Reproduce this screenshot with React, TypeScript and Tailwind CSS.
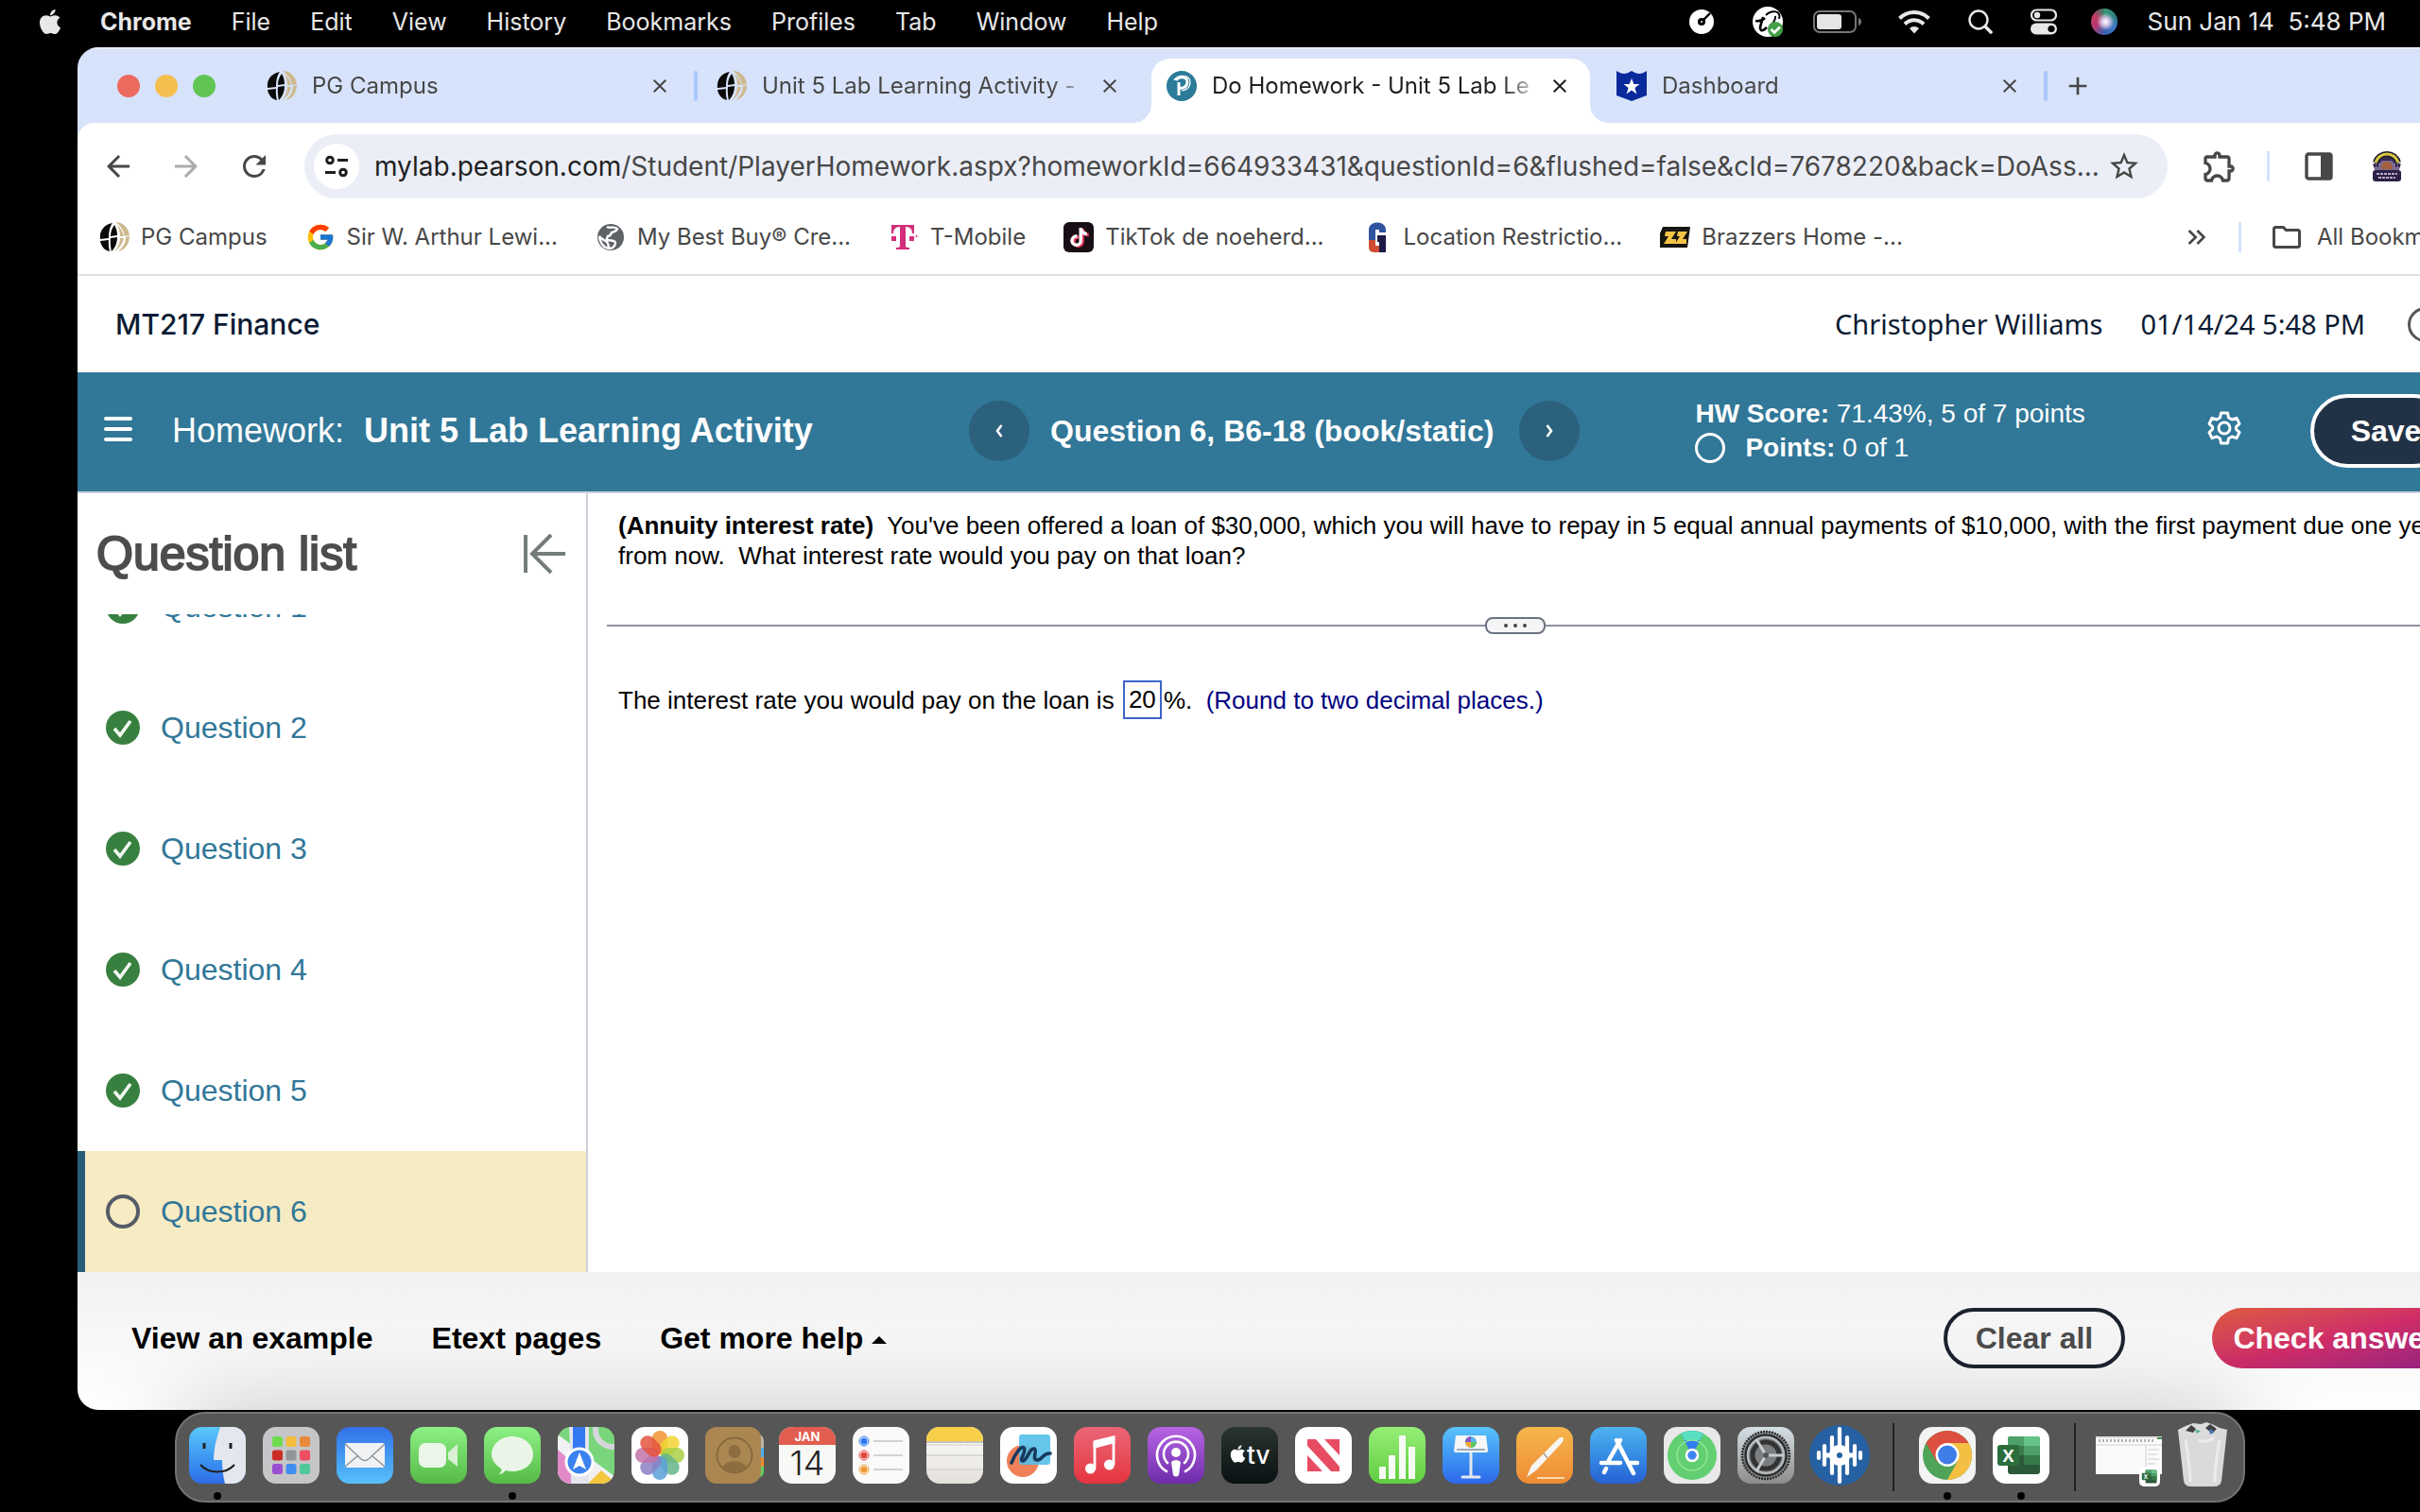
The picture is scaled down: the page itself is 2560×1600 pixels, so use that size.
import type { ReactNode } from "react";
import { FaApple } from "react-icons/fa";
import {
  MdArrowBack,
  MdArrowForward,
  MdClose,
  MdKeyboardDoubleArrowRight,
  MdOutlineExtension,
  MdOutlineFolder,
  MdRefresh,
  MdStarBorder,
  MdAdd,
} from "react-icons/md";
import { FcGoogle } from "react-icons/fc";
import { FaTiktok } from "react-icons/fa6";

/* ---------- Menu bar ---------- */

const menus = ["File", "Edit", "View", "History", "Bookmarks", "Profiles", "Tab", "Window", "Help"];

function MenuBar() {
  return (
    <header className="flex h-[50px] items-center bg-black pb-1 pl-[38px] pr-9 text-[25px] leading-8 text-[#e8e8e8]">
      <FaApple className="mr-[38px] size-[30px] shrink-0" />
      <nav className="flex items-center gap-[42px]">
        <button className="font-bold">Chrome</button>
        {menus.map((m) => (
          <button key={m}>{m}</button>
        ))}
      </nav>
      <div className="ml-auto flex items-center">
        <svg viewBox="0 0 26 26" className="mr-[41px] size-[26px]">
          <circle cx="13" cy="13" r="13" fill="#fff" />
          <circle cx="13" cy="13" r="4" fill="#000" />
          <path d="M14 12 22 4" stroke="#000" strokeWidth="2.4" />
          <circle cx="13" cy="13" r="1" fill="#fff" />
        </svg>
        <svg viewBox="0 0 32 32" className="mr-8 size-8">
          <circle cx="16" cy="16" r="16" fill="#fff" />
          <path d="M3 15c5 1 8-1 10-3M11 11c-1 6-5 12-2 14 2 1 4-1 6-3" stroke="#000" strokeWidth="2.6" fill="none" />
          <path d="M14 9c6-6 17-5 14 4M24 10c1 4-3 8-6 12" stroke="#000" strokeWidth="2" fill="none" />
          <circle cx="24" cy="24" r="8" fill="#43a047" />
          <path d="m19.500 24 3.500 3.500 6-6" stroke="#fff" strokeWidth="2.600" fill="none" />
        </svg>
        <svg viewBox="0 0 52 24" className="mr-[38px] h-6 w-[52px]">
          <rect x="1" y="1" width="44" height="22" rx="6" fill="none" stroke="#777" strokeWidth="2" />
          <rect x="4" y="4" width="26" height="16" rx="3" fill="#e5e5e5" />
          <path d="M48 8c4 1 4 7 0 8Z" fill="#777" />
        </svg>
        <svg viewBox="0 0 34 26" className="mr-10 h-[26px] w-[34px]" fill="none" stroke="#e8e8e8" strokeWidth="4">
          <path d="M1.500 9.500a22 22 0 0 1 31 0" />
          <path d="M7 15.500a14 14 0 0 1 20 0" />
          <path d="M17 25.500 12 20a7 7 0 0 1 10 0Z" fill="#e8e8e8" stroke="none" />
        </svg>
        <svg viewBox="0 0 26 26" className="mr-10 size-[26px]" fill="none" stroke="#e8e8e8">
          <circle cx="11" cy="11" r="9.500" strokeWidth="2.400" />
          <path d="m18 18 6 6" strokeWidth="3.600" strokeLinecap="round" />
        </svg>
        <svg viewBox="0 0 28 28" className="mr-9 size-7">
          <rect x="1" y="1.500" width="26" height="11" rx="5.500" fill="none" stroke="#e8e8e8" strokeWidth="2.200" />
          <circle cx="7" cy="7" r="3.200" fill="#e8e8e8" />
          <rect y="15.500" width="28" height="12" rx="6" fill="#e8e8e8" />
          <circle cx="22" cy="21.500" r="3.600" fill="#000" />
        </svg>
        <span className="mr-8 size-7 rounded-full bg-[radial-gradient(circle_at_55%_50%,#fff_0,#d9c7e8_18%,transparent_45%),conic-gradient(#3a9a78,#2f7f86,#3f78c8,#3a5fae,#b33a72,#c23a60,#3a8068)]" />
        <time className="whitespace-pre text-[26px]">Sun Jan 14  5:48 PM</time>
      </div>
    </header>
  );
}

/* ---------- Favicons ---------- */

function GlobeSlice() {
  return (
    <svg viewBox="0 0 32 32" className="size-8 shrink-0">
      <path d="M14 1C4 3 0 10 1 18l9-1C10 10 11 5 14 1ZM1 20c1 6 5 10 10 11-1-4-1.500-8-1-12ZM12 17l7-1c0 6-2 11-6 15-1-4-1.500-9-1-14ZM16 3c-3 4-4 8-4 12l7-1c0-4-1-8-3-11Z" fill="#0b0b0b" />
      <path d="M17 0c8 0 14 6 15 14l-5 1C26 9 22 3 17 0Zm0 2c4 3 5 8 5 13h4C25 10 22 5 17 2Zm5 15h4c-1 6-5 11-10 14 4-4 6-9 6-14Zm6-1 4-1c0 8-5 15-12 16 5-4 8-9 8-15Z" fill="#cdb98c" />
    </svg>
  );
}

function PearsonMark() {
  return (
    <svg viewBox="0 0 32 32" className="size-8 shrink-0">
      <circle cx="16" cy="16" r="16" fill="#2b7b99" />
      <path d="M13 26V12m-3-2c2-4 12-5 12 2 0 5-5 7-8 6" fill="none" stroke="#fff" strokeWidth="3" />
      <path d="M8 10c2-6 17-7 17 2 0 6-5 9-9 9" fill="none" stroke="#fff" strokeWidth="1.200" />
    </svg>
  );
}

function StarShield() {
  return (
    <svg viewBox="0 0 32 32" className="size-8 shrink-0">
      <path d="M0 0c6 4 10 4 16 0 6 4 10 4 16 0v26L16 32 0 26Z" fill="#0a2a9c" />
      <path d="m16 8 2.400 6h6l-5 4 2 6.500L16 20.500l-5.400 4 2-6.500-5-4h6Z" fill="#fff" />
    </svg>
  );
}

function GrayGlobe() {
  return (
    <svg viewBox="0 0 32 32" className="size-8 shrink-0">
      <circle cx="16" cy="16" r="14" fill="#5f6368" />
      <path d="M12 5c3 2 8-1 11 2-1 3-3 3-6 4-1 3-2 4-4 4 0 2-3 3 0 4s8 0 8 3-3 6-6 6c-2-2-1-5-3-7-3-2-6-3-8-6 1 8 5 13 12 13" fill="none" stroke="#fff" strokeWidth="2.400" />
    </svg>
  );
}

function TMark() {
  return (
    <svg viewBox="0 0 32 32" className="size-8 shrink-0" fill="#d42e7b">
      <path d="M3 3h24v9h-2c0-4-2-7-7-7v19c0 3 1 3 4 3v2H8v-2c3 0 4 0 4-3V5c-5 0-7 3-7 7H3ZM3 15h5v5H3Zm19 0h5v5h-5Z" />
      <circle cx="29.500" cy="15" r="1" />
    </svg>
  );
}

function BlockG() {
  return (
    <svg viewBox="0 0 32 32" className="size-8 shrink-0">
      <path d="M7 20V8c0-10 18-10 18 0v3h-7V8h-4v12Z" fill="#2f55a0" />
      <path d="M7 19h7v6h4v7h-5c-5 0-6-3-6-6Z" fill="#cf4b33" />
      <path d="M16 14h9v18h-7V21h-2Z" fill="#1d1b45" />
    </svg>
  );
}

function ZzMark() {
  return (
    <svg viewBox="0 0 32 32" className="size-8 shrink-0">
      <path d="M3 5h29l-3 22H0V12Z" fill="#17150f" />
      <path d="M6 10h11l-5 8h5v5H4l5-8H5Zm13 0h10l-5 8h4v5H16l5-8h-3Z" fill="#f6c445" />
    </svg>
  );
}

function TikTokMark() {
  return (
    <span className="flex size-8 shrink-0 items-center justify-center rounded-md bg-[#180f16]">
      <FaTiktok className="size-5 text-white drop-shadow-[2px_1px_0_#e8375b]" />
    </span>
  );
}

/* ---------- Browser chrome ---------- */

const tabs = [
  { title: "PG Campus", icon: <GlobeSlice />, divider: true },
  { title: "Unit 5 Lab Learning Activity -", icon: <GlobeSlice /> },
  { title: "Do Homework - Unit 5 Lab Le", icon: <PearsonMark />, active: true },
  { title: "Dashboard", icon: <StarShield />, divider: true },
];

function TabStrip() {
  return (
    <div className="flex h-20 border-t-2 border-[#e6edfc] bg-[#d7e3fb] pl-[42px] pt-[10px] text-[24px] text-[#474747]">
      <div className="mr-[38px] flex h-[58px] items-center gap-4">
        <button aria-label="Close window" className="size-6 rounded-full bg-[#ec6a5e]" />
        <button aria-label="Minimize window" className="size-6 rounded-full bg-[#f4bf4f]" />
        <button aria-label="Zoom window" className="size-6 rounded-full bg-[#61c554]" />
      </div>
      {tabs.map((t) => (
        <div key={t.title} className="flex shrink-0">
          <div
            className={`relative flex h-[68px] w-[464px] items-center rounded-t-[20px] pb-[10px] pl-4 pr-5 ${
              t.active ? "bg-white text-[#1f1f1f]" : ""
            }`}
          >
            {t.active && (
              <>
                <span className="absolute -left-5 bottom-0 size-5 bg-[radial-gradient(circle_at_0_0,transparent_20px,white_20px)]" />
                <span className="absolute -right-5 bottom-0 size-5 bg-[radial-gradient(circle_at_100%_0,transparent_20px,white_20px)]" />
              </>
            )}
            {t.icon}
            <span className="ml-4 mr-2 min-w-0 flex-1 overflow-hidden whitespace-nowrap mask-r-from-88%">{t.title}</span>
            <button aria-label="Close tab">
              <MdClose className="size-6" />
            </button>
          </div>
          <div className="flex h-[58px] w-3 items-center justify-center">
            {t.divider && <span className="h-8 w-1 rounded-full bg-[#a8c7fa]" />}
          </div>
        </div>
      ))}
      <button aria-label="New tab" className="ml-3 h-[58px]">
        <MdAdd className="size-8" />
      </button>
    </div>
  );
}

function Toolbar() {
  return (
    <div className="bg-[#d7e3fb]">
      <div className="flex h-[92px] items-center rounded-tl-[18px] bg-white pl-[25px] text-[#474747]">
        <button aria-label="Back" className="mr-9">
          <MdArrowBack className="size-9" />
        </button>
        <button aria-label="Forward" className="mr-9 text-[#ababab]">
          <MdArrowForward className="size-9" />
        </button>
        <button aria-label="Reload" className="mr-[35px]">
          <MdRefresh className="size-9" />
        </button>
        <div className="flex h-[68px] w-[1971px] shrink-0 items-center rounded-full bg-[#ebeef6] pl-[10px] pr-7">
          <button aria-label="Site information" className="mr-4 flex size-12 shrink-0 items-center justify-center rounded-full bg-white">
            <svg viewBox="0 0 24 24" className="size-6" fill="none" stroke="#1f1f1f" strokeWidth="3">
              <circle cx="5" cy="5.500" r="3.300" />
              <path d="M13 5.500h11M0 18.500h11" />
              <circle cx="19" cy="18.500" r="3.300" />
            </svg>
          </button>
          <span className="flex-1 whitespace-nowrap text-[28px] leading-9" role="textbox" aria-label="Address">
            <span className="text-[#1f1f1f]">mylab.pearson.com</span>
            /Student/PlayerHomework.aspx?homeworkId=664933431&amp;questionId=6&amp;flushed=false&amp;cId=7678220&amp;back=DoAss...
          </span>
          <button aria-label="Bookmark this tab">
            <MdStarBorder className="size-9" />
          </button>
        </div>
        <button aria-label="Extensions" className="ml-[35px]">
          <MdOutlineExtension className="size-10" />
        </button>
        <span className="ml-[30px] h-8 w-[3px] bg-[#d3e3fd]" />
        <button aria-label="Side panel" className="ml-[37px]">
          <svg viewBox="0 0 30 30" className="size-[30px]">
            <rect x="2" y="2" width="26" height="26" rx="2" fill="none" stroke="#474747" strokeWidth="3.400" />
            <rect x="17" y="2" width="12" height="26" fill="#474747" />
          </svg>
        </button>
        <button aria-label="Profile" className="ml-10">
          <svg viewBox="0 0 34 34" className="size-[34px]">
            <path d="M4 16a13 13 0 0 1 26 0Z" fill="#3a2b55" />
            <path d="M5 13a12.500 12.500 0 0 1 24 0" fill="none" stroke="#1f1830" strokeWidth="6" />
            <path d="M5 13a12.500 12.500 0 0 1 24 0" fill="none" stroke="#d6c93f" strokeWidth="3" />
            <path d="M2 14h7l3-3h10l3 3h7l-2 7H4Z" fill="#7b6a96" />
            <path d="M11 20c0-11 12-11 12 0Z" fill="#a55f3c" />
            <path d="M3 16h5M26 16h5" stroke="#1f1830" strokeWidth="3" strokeDasharray="2 1" />
            <rect x="2" y="21" width="30" height="12" rx="3" fill="#2c2145" />
            <path d="M6 25h22M8 29h18" stroke="#b7acc9" strokeWidth="2" strokeDasharray="3 1" />
          </svg>
        </button>
      </div>
    </div>
  );
}

const bookmarks = [
  { label: "PG Campus", icon: <GlobeSlice /> },
  { label: "Sir W. Arthur Lewi...", icon: <FcGoogle className="size-8 shrink-0" /> },
  { label: "My Best Buy® Cre...", icon: <GrayGlobe /> },
  { label: "T-Mobile", icon: <TMark /> },
  { label: "TikTok de noeherd...", icon: <TikTokMark /> },
  { label: "Location Restrictio...", icon: <BlockG /> },
  { label: "Brazzers Home -...", icon: <ZzMark /> },
];

function BookmarksBar() {
  return (
    <div className="flex h-[70px] items-center border-b-2 border-[#e0e0e0] bg-white pb-[10px] pl-[23px] text-[24px] leading-8 text-[#474747]">
      <div className="flex items-center gap-10">
        {bookmarks.map((b) => (
          <a key={b.label} href="#" className="flex shrink-0 items-center gap-3 whitespace-nowrap">
            {b.icon}
            {b.label}
          </a>
        ))}
      </div>
      <div className="ml-auto flex w-[312px] shrink-0 items-center">
        <button aria-label="More bookmarks">
          <MdKeyboardDoubleArrowRight className="size-8" />
        </button>
        <span className="ml-7 h-8 w-[3px] bg-[#d3e3fd]" />
        <a href="#" className="ml-[30px] flex items-center gap-[14px] whitespace-nowrap">
          <MdOutlineFolder className="size-9" />
          All Bookmarks
        </a>
      </div>
    </div>
  );
}

/* ---------- Homework page ---------- */

function CourseHeader() {
  return (
    <div className="flex h-[102px] items-center bg-white pl-10 pr-9 text-[30px] leading-9 text-[#0b1b33]">
      <h1 className="font-medium">MT217 Finance</h1>
      <span className="ml-auto font-['Noto_Sans'] text-[29px]">Christopher Williams</span>
      <span className="ml-10 font-['Noto_Sans'] text-[29px]">01/14/24 5:48 PM</span>
      <button
        aria-label="Help"
        className="ml-[45px] flex size-[37px] items-center justify-center rounded-full border-[3px] border-[#555] text-[24px] text-[#555]"
      >
        ?
      </button>
    </div>
  );
}

function NavCircle({ label, d }: { label: string; d: string }) {
  return (
    <button aria-label={label} className="flex size-16 shrink-0 items-center justify-center rounded-full bg-[#2b617c]">
      <svg viewBox="0 0 16 16" className="size-4">
        <path d={d} fill="none" stroke="#fff" strokeWidth="2.600" />
      </svg>
    </button>
  );
}

function HomeworkBar() {
  return (
    <div className="flex h-[128px] items-center whitespace-nowrap border-b-2 border-[#d0d0dc] bg-[#317798] pb-[3px] pl-7 pr-7 text-white">
      <button aria-label="Menu" className="mb-1 mr-[42px]">
        <svg viewBox="0 0 30 28" className="h-7 w-[30px]" stroke="#fff" strokeWidth="4" strokeLinecap="round">
          <path d="M2 3h26M2 14h26M2 25h26" />
        </svg>
      </button>
      <h2 className="w-[843px] shrink-0 text-[36px] leading-10">
        Homework: <strong className="ml-[11px]">Unit 5 Lab Learning Activity</strong>
      </h2>
      <NavCircle label="Previous question" d="M10.500 2 6 8l4.500 6" />
      <h3 className="ml-[22px] mr-[27px] text-[32px] font-bold leading-10">Question 6, B6-18 (book/static)</h3>
      <NavCircle label="Next question" d="M5.500 2 10 8l-4.500 6" />
      <div className="ml-[122px] text-[28px] leading-9">
        <p>
          <strong>HW Score:</strong> 71.43%, 5 of 7 points
        </p>
        <p className="flex items-center">
          <span className="mr-[21px] size-8 rounded-full border-[3px] border-white" />
          <span>
            <strong>Points:</strong> 0 of 1
          </span>
        </p>
      </div>
      <button aria-label="Settings" className="mb-[6px] ml-auto">
        <svg viewBox="0 0 36 36" className="size-9" fill="none" stroke="#fff" strokeWidth="3">
          <path d="M14.500 2h7l1 5 3.500 2 5-1.600 3 6-3.600 3.400v2.400l3.600 3.400-3 6-5-1.600-3.500 2-1 5h-7l-1-5-3.500-2-5 1.600-3-6 3.600-3.400v-2.400L2 13.400l3-6L10 9l3.500-2Z" strokeLinejoin="round" />
          <circle cx="18" cy="18" r="6" />
        </svg>
      </button>
      <button className="ml-[73px] h-[78px] w-[148px] rounded-full border-4 border-white bg-[#223246] pl-3 text-[32px] font-bold">
        Save
      </button>
    </div>
  );
}

const questions = [1, 2, 3, 4, 5, 6];

function QuestionList({ current }: { current: number }) {
  return (
    <aside className="flex w-[540px] shrink-0 flex-col border-r-2 border-[#d0d0dc] bg-white">
      <div className="flex h-[128px] shrink-0 items-center justify-between pl-5 pr-[21px]">
        <h2 className="text-[50px] leading-[60px] text-[#4d4d4d] [-webkit-text-stroke:2px_#4d4d4d]">Question list</h2>
        <button aria-label="Collapse question list">
          <svg viewBox="0 0 46 42" className="h-[42px] w-[46px]" fill="none" stroke="#757c7c" strokeWidth="4">
            <path d="M3 1v40M45 21H10M30 1 10 21l20 20" />
          </svg>
        </button>
      </div>
      <ul className="flex h-[696px] flex-col justify-end overflow-hidden">
        {questions.map((q) => (
          <li
            key={q}
            className={`flex h-32 shrink-0 items-center border-l-8 pl-[22px] ${
              q === current ? "border-[#265c76] bg-[#f7ebc4]" : "border-transparent"
            }`}
          >
            {q === current ? (
              <span className="size-9 rounded-full border-4 border-[#555b66]" />
            ) : (
              <svg viewBox="0 0 36 36" className="size-9" fill="none">
                <circle cx="18" cy="18" r="18" fill="#38803f" />
                <path d="m9 19 6 7 11-15" stroke="#f2f7f2" strokeWidth="3.600" />
              </svg>
            )}
            <a href="#" className="ml-[22px] text-[32px] leading-10 text-[#317798]">
              Question {q}
            </a>
          </li>
        ))}
      </ul>
    </aside>
  );
}

function QuestionBody() {
  return (
    <main className="min-w-0 flex-1 bg-white pl-5 pr-14 text-[26px] leading-8 text-black">
      <p className="-mr-9 whitespace-pre-wrap pl-3 pt-[18px]">
        <strong>(Annuity interest rate)</strong>
        {"  You've been offered a loan of $30,000, which you will have to repay in 5 equal annual payments of $10,000, with the first payment due one year from now.  What interest rate would you pay on that loan?"}
      </p>
      <div className="mt-10 flex h-9 items-center">
        <span className="h-0.5 flex-1 bg-[#8b90a0]" />
        <button
          aria-label="Resize panels"
          className="flex h-[18px] w-16 items-center justify-center gap-1.5 rounded-lg border-2 border-[#6b7280] bg-[#f5f5f8]"
        >
          <span className="size-1 rounded-full bg-[#444]" />
          <span className="size-1 rounded-full bg-[#444]" />
          <span className="size-1 rounded-full bg-[#444]" />
        </button>
        <span className="h-0.5 flex-1 bg-[#8b90a0]" />
      </div>
      <div className="mt-10 flex items-center whitespace-pre pl-3">
        <label htmlFor="rate">The interest rate you would pay on the loan is </label>
        <input id="rate" defaultValue="20" className="mx-0.5 h-[41px] w-[41px] border-2 border-[#3c64c8] px-1 outline-none" />
        <span>%.  </span>
        <span className="text-[#00007f]">(Round to two decimal places.)</span>
      </div>
    </main>
  );
}

function FooterBar() {
  return (
    <footer className="flex h-[146px] items-center whitespace-nowrap bg-linear-to-b from-[#f1f1f1] to-white pb-[6px] pl-[57px] text-[32px] font-bold leading-10 text-black">
      <div className="flex gap-[62px]">
        <button>View an example</button>
        <button>Etext pages</button>
        <button className="flex items-center gap-[9px]">
          Get more help
          <svg viewBox="0 0 16 8" className="mt-1 h-2 w-4">
            <path d="M0 8 8 0l8 8Z" />
          </svg>
        </button>
      </div>
      <button className="ml-auto h-16 w-48 rounded-full border-4 border-[#1c222e] text-[#4d4d4d]">Clear all</button>
      <button className="ml-[92px] mr-5 h-16 w-[260px] rounded-full bg-linear-to-br from-[#dd5a3c] via-[#cf2c68] to-[#8f1f80] text-white">
        Check answer
      </button>
    </footer>
  );
}

/* ---------- Dock ---------- */

function Tile({ name, className, running, children }: { name: string; className: string; running?: boolean; children?: ReactNode }) {
  return (
    <button aria-label={name} className="relative size-[60px] shrink-0">
      <span className={`block size-full ${className}`}>
        <svg viewBox="0 0 60 60" className="size-full overflow-visible">
          {children}
        </svg>
      </span>
      {running && <span className="absolute -bottom-[17px] left-[26px] size-2 rounded-full bg-black" />}
    </button>
  );
}

const sq = "rounded-[14px] overflow-hidden";
const petals = ["#f0952f", "#f2d435", "#a9cf46", "#63b58a", "#5a9fd8", "#8a80c4", "#c174a8", "#e5533d"];
const pads = ["#6fdc50", "#f3bd3a", "#e8893a", "#c92f26", "#8f9598", "#ee4e62", "#9a4fd0", "#3f8ff0", "#4fc99a"];
const pulse = [
  [8, 6],
  [14, 20],
  [22, 38],
  [30, 56],
  [38, 38],
  [46, 20],
  [52, 6],
];

function ExcelMark() {
  return (
    <>
      <rect x="16" y="10" width="34" height="40" rx="3" fill="#2c5a39" />
      <path d="M16 20V13q0-3 3-3h14v10Z" fill="#4ea06a" />
      <path d="M33 10h14q3 0 3 3v7H33Z" fill="#64c387" />
      <path d="M16 20h17v10H16Z" fill="#3a7c4a" />
      <path d="M33 20h17v10H33Z" fill="#4ea06a" />
      <path d="M33 30h17v10H33Z" fill="#37794a" />
      <rect x="5" y="19" width="23" height="22" rx="3" fill="#2b6e3c" />
      <text x="16.500" y="36.500" textAnchor="middle" fontSize="18" fontWeight="700" fill="#fff" fontFamily="Open Sans, sans-serif">
        X
      </text>
    </>
  );
}

function Dock() {
  return (
    <nav className="mt-0.5 flex justify-center">
      <div className="flex h-24 items-center gap-[18px] rounded-[32px] border-2 border-[#747474] bg-[#565656] px-[13px] pb-[5px] shadow-[0_0_100px_rgba(0,0,0,0.25)]">
        <Tile name="Finder" running className={`${sq} bg-linear-to-b from-[#5ac8fa] to-[#2f6be8]`}>
          <path d="M33 0c-4 12-7 23-7 35h9c0 9 1 17 3 25h22V0Z" fill="#e4e7ee" />
          <path d="M16 17v6M44 17v6" stroke="#222" strokeWidth="3" />
          <path d="M12 40c9 10 27 10 36 0" fill="none" stroke="#222" strokeWidth="2.200" />
        </Tile>
        <Tile name="Launchpad" className={`${sq} bg-[#c6c6c8]`}>
          {pads.map((c, i) => (
            <rect key={c} x={10 + (i % 3) * 14.500} y={10 + Math.floor(i / 3) * 14.500} width="11" height="11" rx="2.500" fill={c} />
          ))}
        </Tile>
        <Tile name="Mail" className={`${sq} bg-linear-to-b from-[#3470e8] to-[#57c0fa]`}>
          <rect x="9" y="17" width="42" height="26" rx="2" fill="#f1f2f3" />
          <path d="m9 18 17 16q4 3 8 0l17-16M9 42l14-12m28 12L37 30" fill="none" stroke="#8b8f94" strokeWidth="1.300" />
        </Tile>
        <Tile name="FaceTime" className={`${sq} bg-linear-to-b from-[#8cf085] to-[#56bb45]`}>
          <rect x="9" y="17" width="29" height="26" rx="7" fill="#eaf7e8" />
          <path d="M40 27 50 18v24L40 34Z" fill="#d7f0d3" />
        </Tile>
        <Tile name="Messages" running className={`${sq} bg-linear-to-b from-[#8cf085] to-[#56bb45]`}>
          <path d="M30 10c12 0 22 8 22 19s-10 18-22 18q-4 0-7-1c-2 2-4 4-7 4 2-2 3-4 2-6C12 40 8 35 8 29c0-11 10-19 22-19Z" fill="#e9f6e7" />
        </Tile>
        <Tile name="Maps" className={`${sq} bg-[#79d67c]`}>
          <path d="M0 8 60 52v8H0Z" fill="#f1f1f4" />
          <path d="M0 24 14 36v24H0Z" fill="#e28bc8" />
          <path d="M32 60 46 46l14 12v2Z" fill="#f4c63e" />
          <path d="M12 0h21v60H14V40Z" fill="#e3e5ea" />
          <path d="M16 0h13v34H16Z" fill="#3478f2" />
          <circle cx="58" cy="3" r="18" fill="none" stroke="#d5d6da" strokeWidth="6" />
          <circle cx="23" cy="37" r="14" fill="#3b82f0" stroke="#fff" strokeWidth="3" />
          <path d="m23 27 7 18-7-4-7 4Z" fill="#fff" />
        </Tile>
        <Tile name="Photos" className={`${sq} bg-white`}>
          {petals.map((c, i) => (
            <rect key={c} x="22" y="4" width="16" height="25" rx="8" fill={c} opacity="0.850" transform={`rotate(${i * 45} 30 30)`} />
          ))}
        </Tile>
        <Tile name="Contacts" className="">
          <path d="M50 8h8q4 2 4 8v10H50Z" fill="#bdb9a8" />
          <path d="M50 22h12v10H50Z" fill="#4ab0ee" />
          <path d="M50 32h12v10H50Z" fill="#f08c2e" />
          <path d="M50 42h12v6q-1 5-5 5h-7Z" fill="#5fd060" />
          <rect width="59" height="60" rx="12" fill="#ab8651" />
          <circle cx="31" cy="30" r="18.500" fill="none" stroke="#80633a" strokeWidth="1.500" />
          <path d="M18 43c4-9 22-9 26 0-7 7-19 7-26 0Z" fill="#8d6d40" />
          <ellipse cx="31" cy="26" rx="6.500" ry="7" fill="#8d6d40" />
        </Tile>
        <Tile name="Calendar" className={`${sq} bg-[#f8f8f6]`}>
          <rect width="60" height="19" fill="#e15d50" />
          <text x="30" y="15" textAnchor="middle" fontSize="13" fontWeight="700" fill="#fff">
            JAN
          </text>
          <text x="30" y="51" textAnchor="middle" fontSize="36" fontWeight="300" fill="#222">
            14
          </text>
        </Tile>
        <Tile name="Reminders" className={`${sq} bg-[#fbfaf8]`}>
          {["#2f78f0", "#e2483d", "#ec9a33"].map((c, i) => (
            <g key={c}>
              <circle cx="12" cy={15 + i * 15} r="5" fill="#fff" stroke={c} strokeWidth="1" />
              <circle cx="12" cy={15 + i * 15} r="3.600" fill={c} />
              <path d={`M22 ${15 + i * 15}h31`} stroke="#c4c5c8" strokeWidth="1.500" />
            </g>
          ))}
        </Tile>
        <Tile name="Notes" className={`${sq} bg-linear-to-b from-white to-[#e4e1db]`}>
          <rect width="60" height="15" fill="#f8cf48" />
          <path d="M0 16h60" stroke="#b5b0a4" strokeWidth="1.500" />
          <path d="M0 19h60" stroke="#999" strokeWidth="1" strokeDasharray="1 1.400" />
          <path d="M0 30h60M0 45h60" stroke="#d4d2cd" strokeWidth="1.500" />
        </Tile>
        <Tile name="Freeform" className={`${sq} bg-white`}>
          <circle cx="24" cy="36" r="17" fill="#f08058" />
          <rect x="20" y="8" width="33" height="32" rx="3" fill="#55bfe9" opacity="0.900" />
          <path d="M12 38c4-10 10-18 13-16 4 3-6 14-1 14 5-1 7-14 12-13 4 1-3 12 3 12s6-8 14-7" fill="none" stroke="#173a5e" strokeWidth="3.600" strokeLinecap="round" />
        </Tile>
        <Tile name="Music" className={`${sq} bg-linear-to-b from-[#eb6577] to-[#e4333d]`}>
          <path d="M22 45V17l20-5v28" fill="none" stroke="#fff" strokeWidth="2.800" />
          <path d="M20.600 14.500 43.400 9v8L20.600 23Z" fill="#fff" />
          <circle cx="17.500" cy="44" r="5.500" fill="#fff" />
          <circle cx="37.500" cy="40" r="5.500" fill="#fff" />
        </Tile>
        <Tile name="Podcasts" className={`${sq} bg-linear-to-b from-[#b765e4] to-[#6f2bab]`}>
          <g fill="none" stroke="#fff" strokeWidth="2.600" strokeLinecap="round">
            <path d="M20 47a20 20 0 1 1 20 0" />
            <path d="M21 38a13 13 0 1 1 18 0" />
          </g>
          <circle cx="30" cy="27" r="5" fill="#fff" />
          <path d="M25 37q5-4 10 0l-2 14q-3 3-6 0Z" fill="#fff" />
        </Tile>
        <Tile name="TV" className={`${sq} bg-linear-to-b from-[#2a352f] to-[#0b1113]`}>
          <FaApple x="7" y="18" size="21" color="#fff" />
          <text x="27" y="39" fontSize="26" fontWeight="500" fill="#fff">
            tv
          </text>
        </Tile>
        <Tile name="News" className={`${sq} bg-white`}>
          <path d="M13 13h9l25 29v5h-9L13 20Z" fill="#e84c62" />
          <path d="M31 13h16v17ZM13 30v17h16Z" fill="#e84c62" />
        </Tile>
        <Tile name="Numbers" className={`${sq} bg-linear-to-b from-[#95ee75] to-[#60cd3f]`}>
          <path d="M11 42h7v13h-7ZM21 30h7v25h-7ZM32 9h7v46h-7ZM42 21h7v34h-7Z" fill="#f6fbf4" />
        </Tile>
        <Tile name="Keynote" className={`${sq} bg-linear-to-b from-[#5bc3fa] to-[#2e67ea]`}>
          <path d="M14 9h32l2 16q0 2-2 2H14q-2 0-2-2Z" fill="#f5f6f8" />
          <path d="M15 24h30" stroke="#7990ad" strokeWidth="1.500" />
          <circle cx="30" cy="16" r="6" fill="#60b5ec" />
          <path d="M30 16V10a6 6 0 0 0-6 6Z" fill="#8a57c4" />
          <path d="M30 16h-6a6 6 0 0 0 6 6Z" fill="#f1a73a" />
          <path d="M30 16h6a6 6 0 0 1-6 6Z" fill="#5fc462" />
          <path d="M30 28v24M21 53h18" stroke="#e4e8ee" strokeWidth="3" strokeLinecap="round" />
        </Tile>
        <Tile name="Pages" className={`${sq} bg-linear-to-b from-[#f5b64c] to-[#ee8b35]`}>
          <path d="M11 53 16 41 45 12q4-2 5 0 0 3-2 5L21 46Z" fill="#f7f5f2" />
          <path d="m29 28 4 5" stroke="#a59d92" strokeWidth="1.500" />
          <path d="M22 54h29" stroke="#fbd9ab" strokeWidth="1.800" />
        </Tile>
        <Tile name="App Store" className={`${sq} bg-linear-to-b from-[#4eb4f0] to-[#2760d4]`}>
          <path d="M12 38h20M42 38h8M32 14 20 35M28 14l18 35M17 44l-2 4" stroke="#fff" strokeWidth="4.500" strokeLinecap="round" />
        </Tile>
        <Tile name="Find My" className={`${sq} bg-[#e9e9ea]`}>
          <circle cx="30" cy="30" r="26" fill="#62cf72" />
          <path d="M30 30 18 7q12-6 24 0Z" fill="#2f7ff0" />
          <path d="M22 14 18 7q12-6 24 0l-4 7Z" fill="#59dfc0" />
          <circle cx="30" cy="30" r="16" fill="none" stroke="#8fe598" strokeWidth="1.500" />
          <circle cx="30" cy="30" r="6" fill="#3f86f2" stroke="#fff" strokeWidth="2.600" />
        </Tile>
        <Tile name="System Settings" className={`${sq} bg-linear-to-b from-[#d5e0e6] to-[#8e8d8a]`}>
          <circle cx="30" cy="30" r="25" fill="#8b9093" stroke="#2b2b2b" strokeWidth="2.500" strokeDasharray="2 1" />
          <circle cx="30" cy="30" r="21.500" fill="#707376" stroke="#2b2b2b" strokeWidth="2.500" />
          <circle cx="30" cy="30" r="19" fill="none" stroke="#b5babd" strokeWidth="2.500" />
          <circle cx="30" cy="30" r="14" fill="#7b7e81" stroke="#333" strokeWidth="5" />
          <path d="M30 30h19M30 30 20 13M30 30 20 47" stroke="#c8cccf" strokeWidth="3" />
          <circle cx="30" cy="30" r="3" fill="#555" />
        </Tile>
        <Tile name="Audio" className="">
          <circle cx="30" cy="30" r="32" fill="#2661a3" />
          <g stroke="#fff" strokeWidth="4.200" strokeLinecap="round">
            {pulse.map(([x, h]) => (
              <path key={x} d={`M${x} ${30 - h / 2}v${h}`} />
            ))}
          </g>
          <path d="M14 30h32" stroke="#fff" strokeWidth="5" />
          <circle cx="30" cy="30" r="11" fill="#fff" />
          <circle cx="30" cy="30" r="3" fill="#2661a3" />
        </Tile>
        <span className="mx-2 mt-[5px] h-[72px] w-0.5 bg-[#222]" />
        <Tile name="Chrome" running className={`${sq} bg-[#f3f3f3]`}>
          <circle cx="30" cy="30" r="26" fill="#4fa457" />
          <path d="M7.500 17A26 26 0 0 1 52.500 17H30L19 37Z" fill="#dd4f41" />
          <path d="M30 17h22.500A26 26 0 0 1 30 56l11-20Z" fill="#f4bf42" />
          <circle cx="30" cy="29.500" r="12.500" fill="#fff" />
          <circle cx="30" cy="29.500" r="10" fill="#3f7de8" />
        </Tile>
        <Tile name="Excel" running className={`${sq} bg-white`}>
          <ExcelMark />
        </Tile>
        <span className="mx-2 mt-[5px] h-[72px] w-0.5 bg-[#222]" />
        <Tile name="Minimized workbook" className="">
          <rect x="-5" y="10" width="70" height="40" fill="#fafafa" />
          <path d="M-5 11h70" stroke="#e0e0e0" strokeWidth="2" />
          <path d="M-2 14.500h60" stroke="#b0b5b0" strokeWidth="3" strokeDasharray="2 2" />
          <path d="M-5 19h70M48 19v31M50 24h12M50 29h10M50 34h12M50 39h8" stroke="#cfcfcf" strokeWidth="1" />
          <path d="M60 12h5" stroke="#3a8a50" strokeWidth="2" />
          <rect x="41" y="42" width="22" height="21" rx="5" fill="#fff" />
          <g transform="translate(42 42) scale(.35)">
            <ExcelMark />
          </g>
        </Tile>
        <Tile name="Trash" className="">
          <path d="m4 3 8-4 8-3 8 1 6-2 8 3 6 3 8 2-3 8H7Z" fill="#dcdcdc" />
          <path d="m12 4 6-6 5 4-3 4ZM33 1l5-4 7 5-5 5Z" fill="#3f3f44" />
          <path d="m22 3 6 1-4 3Z" fill="#44b58a" />
          <path d="m37 2 6 3-5 3Z" fill="#4479c0" />
          <path d="M4 3q5 6 26 6t26-6l-6 54q-1 6-8 6H18q-7 0-8-6Z" fill="#dadada" />
          <path d="M12 14q5 30 5 44M48 14q-5 26-5 44M26 14q8 4 16-3" fill="none" stroke="#ececec" strokeWidth="3" />
        </Tile>
      </div>
    </nav>
  );
}

export default function App() {
  return (
    <div className="min-h-screen overflow-hidden bg-black font-['Inter',sans-serif]">
      <MenuBar />
      <div className="-mr-[60px] ml-[82px] overflow-hidden rounded-l-[22px]">
        <TabStrip />
        <Toolbar />
        <BookmarksBar />
        <CourseHeader />
        <div className="font-['Liberation_Sans',Arial,sans-serif]">
          <HomeworkBar />
          <div className="flex">
            <QuestionList current={6} />
            <QuestionBody />
          </div>
          <FooterBar />
        </div>
      </div>
      <Dock />
    </div>
  );
}
